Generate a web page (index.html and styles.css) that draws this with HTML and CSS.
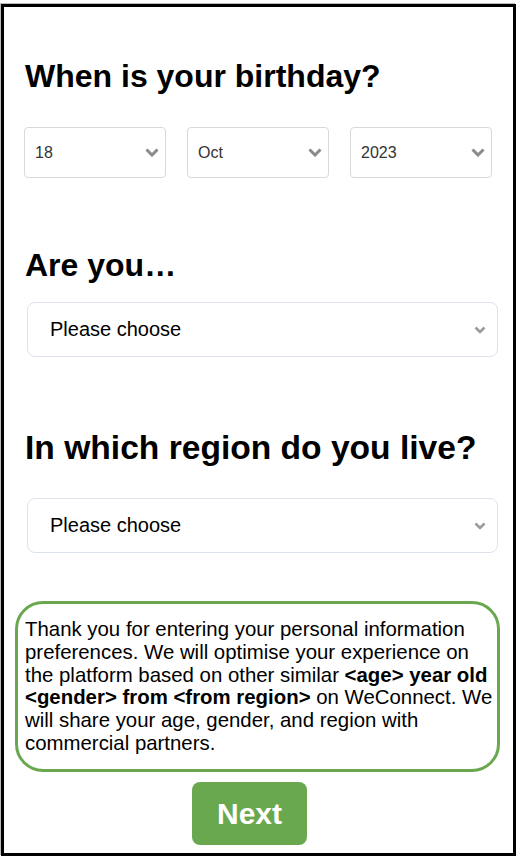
FILE: index.html
```html
<!DOCTYPE html>
<html>
<head>
<meta charset="utf-8">
<link rel="stylesheet" href="styles.css">
</head>
<body>
<div class="frame">
  <h1 class="q q1">When is your birthday?</h1>
  <div class="dob">
    <div class="sel-sm"><span>18</span><svg class="chev-sm" viewBox="0 0 14 9"><polyline points="1.5,1.5 7,7 12.5,1.5"/></svg></div>
    <div class="sel-sm"><span>Oct</span><svg class="chev-sm" viewBox="0 0 14 9"><polyline points="1.5,1.5 7,7 12.5,1.5"/></svg></div>
    <div class="sel-sm"><span>2023</span><svg class="chev-sm" viewBox="0 0 14 9"><polyline points="1.5,1.5 7,7 12.5,1.5"/></svg></div>
  </div>
  <h2 class="q q2">Are you…</h2>
  <div class="sel-lg"><span>Please choose</span><svg class="chev-lg" viewBox="0 0 12 8"><polyline points="1.5,1.5 6,6 10.5,1.5"/></svg></div>
  <h2 class="q q3">In which region do you live?</h2>
  <div class="sel-lg"><span>Please choose</span><svg class="chev-lg" viewBox="0 0 12 8"><polyline points="1.5,1.5 6,6 10.5,1.5"/></svg></div>
  <div class="notice">Thank you for entering your personal information preferences. We will optimise your experience on the platform based on other similar <b>&lt;age&gt; year old &lt;gender&gt; from &lt;from region&gt;</b> on WeConnect. We will share your age, gender, and region with commercial partners.</div>
  <div class="actions"><button class="next">Next</button></div>
</div>
</body>
</html>
```

FILE: styles.css
```css
html, body {
  margin: 0;
  padding: 0;
  background: #fff;
}
body {
  font-family: "Liberation Sans", Arial, sans-serif;
  color: #000;
}
.frame {
  box-sizing: border-box;
  width: 515px;
  height: 852px;
  margin: 4px 0 0 1px;
  border: 3px solid #000;
  box-shadow: -1px -1px 0 #bbb;
  display: flex;
  flex-direction: column;
}
.q {
  margin: 0;
  font-size: 32px;
  line-height: 36px;
  font-weight: bold;
  padding-left: 21px;
}
.q1 { margin-top: 51px; }
.q2 { margin-top: 69px; }
.q3 { margin-top: 73px; font-size: 33.6px; }
.dob {
  display: flex;
  gap: 21px;
  margin: 33px 0 0 20px;
}
.sel-sm {
  box-sizing: border-box;
  width: 142px;
  height: 51px;
  border: 1px solid #d9d9d9;
  border-radius: 4px;
  display: flex;
  align-items: center;
  justify-content: space-between;
  padding: 0 6px 0 10px;
  font-size: 16px;
  color: #333;
}
.chev-sm {
  width: 14px;
  height: 9px;
  fill: none;
  stroke: #8a8a8a;
  stroke-width: 3;
}
.sel-lg {
  box-sizing: border-box;
  width: 471px;
  height: 55px;
  margin: 19px 0 0 23px;
  border: 1px solid #dde3ea;
  border-radius: 8px;
  display: flex;
  align-items: center;
  justify-content: space-between;
  padding: 0 11px 0 22px;
  font-size: 20px;
  color: #000;
}
.q2 + .sel-lg { margin-top: 19px; }
.q3 + .sel-lg { margin-top: 32px; }
.chev-lg {
  width: 12px;
  height: 8px;
  fill: none;
  stroke: #9a9a9a;
  stroke-width: 2.6;
}
.notice {
  box-sizing: border-box;
  width: 485px;
  height: 171px;
  margin: 48px 0 0 11px;
  border: 3px solid #6aa84f;
  border-radius: 28px;
  padding: 14px 4px 0 7px;
  font-size: 20.4px;
  line-height: 22.8px;
}
.notice b { font-weight: bold; }
.actions {
  display: flex;
  justify-content: center;
  margin-top: 10px;
  padding-right: 18px;
}
.next {
  width: 115px;
  height: 63px;
  border: none;
  border-radius: 8px;
  background: #6aa84f;
  color: #fff;
  font-family: "Liberation Sans", Arial, sans-serif;
  font-size: 30px;
  font-weight: bold;
  padding: 0;
}
```
